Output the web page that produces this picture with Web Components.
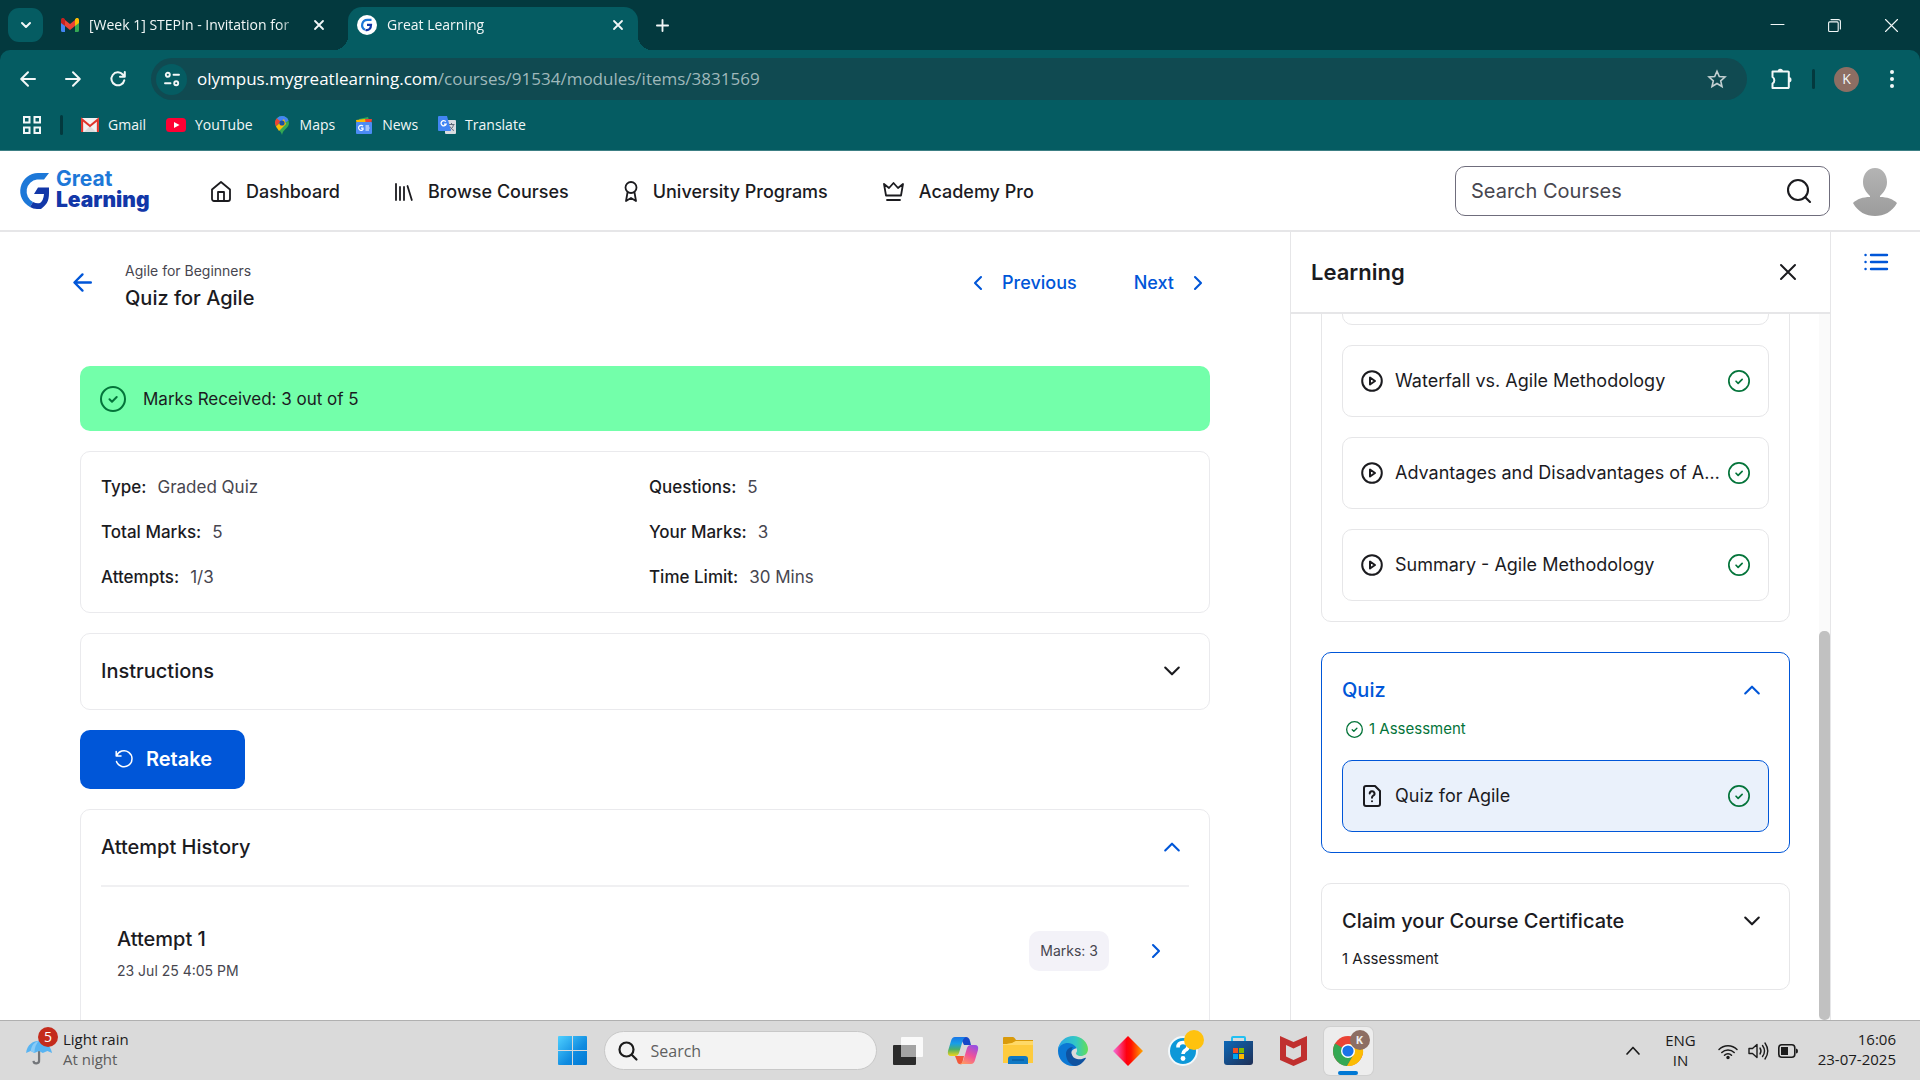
<!DOCTYPE html>
<html lang="en">
<head>
<meta charset="utf-8">
<title>Great Learning</title>
<style>
html, body { margin: 0; height: 100%; }
body {
  display: flex; flex-direction: column; overflow: hidden;
  background: #fff; color: #1b1b1f;
  font-family: Inter, "Liberation Sans", sans-serif;
}
</style>
</head>
<body>
<browser-chrome></browser-chrome>
<course-app></course-app>
<task-bar></task-bar>

<script>
const UI_FONT = '"Open Sans", "Noto Sans", sans-serif';

const define = (name, css, html) => {
  const template = document.createElement('template');
  template.innerHTML = `<style>
    *, *::before, *::after { box-sizing: border-box; }
    :host { box-sizing: border-box; }
    button { font: inherit; color: inherit; background: none; border: 0; padding: 0; margin: 0; text-align: left; }
    a { color: inherit; text-decoration: none; }
    ${css}</style>${html}`;
  customElements.define(name, class extends HTMLElement {
    constructor() {
      super();
      this.attachShadow({ mode: 'open' }).append(template.content.cloneNode(true));
    }
  });
};

/* ---------- icons ---------- */
const line = (vb, w, body) => `<svg viewBox="${vb}" fill="none" stroke="currentColor" stroke-width="${w}" stroke-linecap="round" stroke-linejoin="round">${body}</svg>`;
const art = (vb, body) => `<svg viewBox="${vb}">${body}</svg>`;
const ICONS = {
  caret: line('0 0 12 12', 2, '<path d="M2 4l4 4 4-4"/>'),
  x: line('0 0 16 16', 2, '<path d="M1 1l14 14M15 1L1 15"/>'),
  tabx: line('0 0 10 10', 1.8, '<path d="M1 1l8 8M9 1L1 9"/>'),
  plus: line('0 0 14 14', 2, '<path d="M7 1v12M1 7h12"/>'),
  min: line('0 0 13 13', 1, '<path d="M0 5.500h13"/>'),
  restore: line('0 0 13 13', 1.1, '<rect x=".6" y="2.9" width="9.6" height="9.6" rx="1"/><path d="M3 .6h7.4a2 2 0 0 1 2 2V10"/>'),
  winx: line('0 0 13 13', 1.1, '<path d="M.5.5l12 12M12.500.5l-12 12"/>'),
  back: line('0 0 16 16', 2, '<path d="M15 8H1.500M8 1.200L1.200 8 8 14.800"/>'),
  fwd: line('0 0 16 16', 2, '<path d="M1 8h13.500M8 1.200L14.800 8 8 14.800"/>'),
  reload: line('0 0 16 16', 2, '<path d="M14.300 9.200A6.500 6.500 0 1 1 12.800 3.500L14.500 5.500M14.800 1v4.800H10"/>'),
  tune: line('0 0 16 16', 1.9, '<circle cx="3.800" cy="3.800" r="2"/><path d="M9.500 3.800H15M1 12.200h5.500"/><circle cx="12.200" cy="12.200" r="2"/>'),
  star: line('0 0 20 20', 1.6, '<path stroke-linejoin="miter" d="M10 2.200l2.300 5.300 5.700.5-4.300 3.800 1.300 5.700-5-3-5 3 1.300-5.700L2 8l5.700-.5z"/>'),
  puzzle: art('0 0 22 22', '<path fill="none" stroke="currentColor" stroke-width="2" stroke-linejoin="round" d="M2.500 3.500H18a.8.8 0 0 1 .8.8V19.200a.8.8 0 0 1-.8.8H2.500V15.500a3.800 3.800 0 0 0 0-6.500z"/><path fill="currentColor" d="M7.600 3.500a2.700 2.700 0 0 1 5.400 0zM18.800 9a2.700 2.700 0 0 1 0 5.400z"/>'),
  dots: art('0 0 4 18', '<g fill="currentColor"><circle cx="2" cy="2" r="2"/><circle cx="2" cy="9" r="2"/><circle cx="2" cy="16" r="2"/></g>'),
  apps: line('0 0 18 18', 2, '<g stroke-linejoin="miter"><path d="M1 1h5.500v5.500H1zM11.500 1H17v5.500h-5.500zM1 11.500h5.500V17H1zM11.500 11.500H17V17h-5.500z"/></g>'),
  gmailM: art('0 0 18 14', '<path fill="#4285f4" d="M0 2v10.500A1.500 1.500 0 0 0 1.500 14H4V5z"/><path fill="#34a853" d="M18 2v10.500a1.500 1.500 0 0 1-1.500 1.500H14V5z"/><path fill="#ea4335" d="M4 8V2l5 4 5-4v6l-5 4z"/><path fill="#c5221f" d="M0 2C0 0 2 -.5 3.200.5L4 1.200V8L0 5z"/><path fill="#fbbc04" d="M18 2c0-2-2-2.500-3.200-1.500L14 1.200V8l4-3z"/>'),
  gmail: art('0 0 18 14', '<rect width="18" height="14" rx="1" fill="#f2f2f2"/><path fill="#ddd" d="M3 14l6-6 6 6z"/><path d="M1.100 14V1.500L9 8l7.900-6.500V14" fill="none" stroke="#e0352b" stroke-width="2.100"/>'),
  youtube: art('0 0 20 14', '<rect width="20" height="14" rx="3.500" fill="#ff0033"/><path fill="#fff" d="M8 4l5.500 3L8 10z"/>'),
  maps: art('0 0 14 19', '<path fill="#34a853" d="M7 0a7 7 0 0 1 7 7c0 5-6 6-7 12C6 14 0 12 0 7a7 7 0 0 1 7-7z"/><path fill="#4285f4" d="M7 0a7 7 0 0 1 6.500 4.500L5 10 2 2.200A7 7 0 0 1 7 0z"/><path fill="#ea4335" d="M1.800 2.300L5.500 5.500 1 10.500A7 7 0 0 1 1.800 2.300z"/><path fill="#fbbc04" d="M1 10.500L9 3l2 5-7 7z"/><circle cx="7" cy="7" r="2.600" fill="#1f4fa0"/>'),
  news: art('0 0 18 17', '<path fill="#34a853" d="M4 2L13 0l2 6H4z"/><path fill="#ea4335" d="M9 2h8l-1 6H8z"/><path fill="#fbbc04" d="M1 3l9-1 1 6H2z"/><rect x="1" y="5" width="16" height="12" rx="1" fill="#4c8bf5"/><path d="M8 9.200A2.500 2.500 0 1 0 8 12.500V11.200H6M10.500 9H14M10.500 11h4M10.500 13H14" fill="none" stroke="#fff" stroke-width="1.200"/>'),
  translate: art('0 0 18 18', '<rect x="7" y="4" width="11" height="14" rx="1" fill="#dadce0"/><path d="M10.500 8.500h6M13.500 7v1.500M15.500 8.500c-.5 3-2.500 5-4.500 6M12 10.500c1 2 2.500 3.500 4 4" fill="none" stroke="#5f6b78"/><path fill="#4285f4" d="M1 0h8l4 15H1a1 1 0 0 1-1-1V1a1 1 0 0 1 1-1z"/><path d="M7.800 5.700a2.600 2.600 0 1 0 .3 2.500H6" fill="none" stroke="#fff" stroke-width="1.300"/>'),
  glfav: art('0 0 20 20', '<circle cx="10" cy="10" r="10" fill="#fff"/><path d="M14.500 4.800H10.500A5.300 5.300 0 0 0 8 14.800" fill="none" stroke="#1b76d8" stroke-width="2.200"/><path d="M10 9.800h4C14 13.500 12 15.800 8.500 15" fill="none" stroke="#1237a8" stroke-width="2.200"/>'),
  glmark: art('0 0 29 36', '<path fill="#1d78d8" d="M29 0H18A18 18 0 0 0 10 34L13 29A12 12 0 0 1 17 6.500H24Z"/><path fill="#1237a8" d="M18 14.500H29V20C29 29 26 32 21 36H17Q13 36 10 34L13 29Q17 31 20 30Q23.500 27.500 24 21H14Z"/>'),
  home: line('0 0 20 21', 1.8, '<path d="M1 8.500L10 1l9 7.500V18a2 2 0 0 1-2 2H3a2 2 0 0 1-2-2z"/><path d="M7 20V11h6v9"/>'),
  books: line('0 0 18 18', 1.8, '<path d="M1 1v16M5 4v13M9 4v13M12.500 3l4.300 14"/>'),
  ribbon: line('0 0 14 21', 1.8, '<circle cx="7" cy="6.500" r="5.500"/><path d="M3.500 11.500L2 20l5-3 5 3-1.500-8.500"/>'),
  crown: line('0 0 21 19', 1.8, '<path d="M1 2l5 4 4.500-5L15 6l5-4-2 11.500H3zM4 18h13"/>'),
  search: line('0 0 24 24', 2.1, '<circle cx="11" cy="11" r="10"/><path d="M18 18l5 5"/>'),
  avatar: art('0 0 44 48', '<defs><linearGradient id="g" x2="0" y2="1"><stop stop-color="#b4b4b4"/><stop offset="1" stop-color="#9c9c9c"/></linearGradient></defs><g fill="url(#g)"><path d="M22 0C29 0 34 6 34 14c0 6-3 10-7 14v1c7 0 13 2 17 6-5 9-13 13-22 13S5 44 0 35c4-4 10-6 17-6v-1c-4-4-7-8-7-14C10 6 15 0 22 0z"/></g>'),
  list: line('0 0 24 18', 2.4, '<path d="M7 2h16M7 9h16M7 16h16"/><path d="M1.500 2h.1M1.500 9h.1M1.500 16h.1"/>'),
  check: line('0 0 26 26', 2, '<circle cx="13" cy="13" r="12"/><path d="M9.500 13.300l2.500 2.400 4.700-4.700"/>'),
  down: line('0 0 16 10', 2.1, '<path d="M1.200 1.500L8 8.300l6.800-6.800"/>'),
  up: line('0 0 16 10', 2.1, '<path d="M1.200 8.500L8 1.700l6.800 6.800"/>'),
  left: line('0 0 10 16', 2.1, '<path d="M8 2L2 8l6 6"/>'),
  right: line('0 0 10 16', 2.1, '<path d="M2 2l6 6-6 6"/>'),
  retake: line('0 0 18 18', 1.5, '<path d="M1.200 1.500V6H6M1.500 6A8 8 0 1 1 1.500 11.500"/>'),
  play: line('0 0 22 22', 2, '<circle cx="11" cy="11" r="9.800"/><path d="M9 7.500v7l5-3.500z"/>'),
  quiz: line('0 0 18 22', 2, '<path d="M3 1h9l5 5v13a2 2 0 0 1-2 2H3a2 2 0 0 1-2-2V3a2 2 0 0 1 2-2z"/><path d="M6.700 8.500a2.400 2.400 0 1 1 3.500 2.200C9.200 11.200 9 11.700 9 12.800M9 16.300h.01"/>'),
  umbrella: art('0 0 30 28', '<path d="M14 13v10a3 3 0 0 1-6 .5" fill="none" stroke="#73767a" stroke-width="2.400"/><path fill="#58b4f2" d="M0 15C1 6 8 2 14 2s12 4 14 13l-5-2-5 2-4-2-5 2-4-2z"/><path fill="#8acbf6" d="M5 13C6 6 10 3 14 2c-3 3-5 7-5 13z"/>'),
  windows: art('0 0 29 29', '<defs><linearGradient id="w" x2="1" y2="1"><stop stop-color="#4fd0ff"/><stop offset=".6" stop-color="#0f8be0"/><stop offset="1" stop-color="#0078d4"/></linearGradient></defs><path fill="url(#w)" d="M0 1a1 1 0 0 1 1-1h13v14H0zM15 0h13a1 1 0 0 1 1 1v13H15zM0 15h14v14H1a1 1 0 0 1-1-1zM15 15h14v13a1 1 0 0 1-1 1H15z"/>'),
  wsearch: line('0 0 20 20', 2.2, '<circle cx="8.500" cy="8.500" r="7"/><path d="M14 14l4.500 4.500"/>'),
  taskview: art('0 0 30 28', '<rect y="8" width="23" height="20" rx="1" fill="#2b2b2b"/><rect x="8" width="22" height="20" rx="1" fill="#fafafa"/><path fill="#a4a4a4" d="M8 8h15v12H8z"/>'),
  copilot: art('0 0 30 28', '<defs><linearGradient id="c1" x2="0" y2="1"><stop stop-color="#1976e8"/><stop offset=".35" stop-color="#189fe6"/><stop offset=".65" stop-color="#4caf6a"/><stop offset="1" stop-color="#f4d516"/></linearGradient><linearGradient id="c2" x1=".7" x2=".2" y2="1"><stop stop-color="#9a4fe0"/><stop offset=".5" stop-color="#f0529a"/><stop offset="1" stop-color="#ff9a62"/></linearGradient></defs><path fill="#1749c8" d="M12 0h6q3 0 4 4l1 4h-7z"/><path fill="#f2593a" d="M7 19h9l-2 8q-4 1-5-3z"/><path fill="url(#c1)" d="M7 0h11q-3 1-4 6l-3 10q-1 3-4 3H3q-4 0-3-5L3 4q1-4 4-4z"/><path fill="url(#c2)" d="M23 27H12q3-1 4-6l3-10q1-3 4-3h4q4 0 3 5l-3 10q-1 4-4 4z"/>'),
  folder: art('0 0 30 27', '<path fill="#d99a0b" d="M0 1q0-1 1-1h9q1 0 2 1.500L13 3h17v6H0z"/><path fill="#fecb3e" d="M0 7q8 0 11-2l2-1h17v22H0z"/><path fill="#ffd968" d="M0 7q8 0 11-2l2-1h17v4H0z"/><path fill="#0f78c4" d="M5 27v-5q0-3 3-3h14q3 0 3 3v5z"/><path d="M9 23h12" stroke="#07508f" stroke-width="1"/>'),
  edge: art('0 0 30 30', '<defs><linearGradient id="e" x2="1"><stop stop-color="#2aa5e8"/><stop offset=".6" stop-color="#33c8c4"/><stop offset="1" stop-color="#63de55"/></linearGradient></defs><path fill="#0b78d4" d="M0 15C0 8 4 6 9 6q8 0 10 6l-3 1c-4 2-5 8-1 12q3 3 7 3-3 2-7 2C6 30 0 23 0 15z"/><path fill="url(#e)" d="M0 14C1 5 8 0 15 0c9 0 15 7 15 13 0 5-4 7-7 7-4 0-5-2-5-3 1-1 1-2 1-3 0-3-4-7-9-7-5 0-8 2-10 7z"/><path fill="#0f52a0" d="M8 18c0-4 3-7 7-7-3 3-2 11 4 12 4 .7 6-.3 8.300-1.300 .5 0 .7.500.5.800C25 27 21 30 17 30c-5-1-9-6-9-12z"/>'),
  diamond: art('0 0 30 30', '<defs><linearGradient id="d" x2="1"><stop stop-color="#f56ee0"/><stop offset=".45" stop-color="#ff0010"/><stop offset=".6" stop-color="#ff1000"/><stop offset="1" stop-color="#ffa800"/></linearGradient></defs><path fill="url(#d)" d="M15 0l15 15-15 15L0 15z"/>'),
  help: art('1 6 28 30', '<circle cx="15" cy="21" r="14" fill="#0d98d8" stroke="#f2f8fb" stroke-width="2"/><path d="M10 17.500q0-5 5-5t5 4q0 2.500-3 4-2 1.500-2 3.500" fill="none" stroke="#fff" stroke-width="3.600"/><circle cx="15" cy="28.500" r="2.400" fill="#fff"/><circle cx="26" cy="10" r="10" fill="#ffc20e"/>'),
  store: art('0 0 29 29', '<defs><linearGradient id="s" x2="1" y2="1"><stop stop-color="#0c68b8"/><stop offset="1" stop-color="#1f2f55"/></linearGradient></defs><path d="M8 6V2q0-1 1-1h11q1 0 1 1v4" fill="none" stroke="#22c0f2" stroke-width="2"/><path fill="url(#s)" d="M0 5h29v21q0 3-3 3H3q-3 0-3-3z"/><path fill="#f25022" d="M9 12h5v5H9z"/><path fill="#7fba00" d="M15 12h5v5h-5z"/><path fill="#00a4ef" d="M9 18h5v5H9z"/><path fill="#ffb900" d="M15 18h5v5h-5z"/>'),
  mcafee: art('0 0 27 30', '<path fill="#c0302f" fill-rule="evenodd" d="M0 0l13.500 6L27 0v24l-13.500 6L0 24zM6 9v11.500l7.500 3.500 7.500-3.500V9l-7.500 3.500z"/>'),
  chrome: art('0 0 30 30', '<circle cx="15" cy="15" r="15" fill="#ea4335"/><path fill="#34a853" d="M15 15L2 7.500A15 15 0 0 0 14 30l7-12z"/><path fill="#fbbc04" d="M15 8h13.300A15 15 0 0 1 14 30l7-12z"/><circle cx="15" cy="15" r="7" fill="#fff"/><circle cx="15" cy="15" r="5.600" fill="#1a73e8"/>'),
  trayup: line('0 0 14 9', 1.7, '<path d="M1 8l6-6.500L13 8"/>'),
  wifi: line('0 0 20 18', 1.5, '<path d="M1 7.500a12.500 12.500 0 0 1 18 0M3.800 10.500a8.800 8.800 0 0 1 12.400 0M6.500 13.300a5 5 0 0 1 7 0"/><circle cx="10" cy="15.500" r="1" fill="currentColor"/>'),
  sound: line('0 0 20 20', 1.4, '<path d="M1 7.500h3.500L9 3.500v13l-4.500-4H1zM12 7q2 3 0 6M14.500 4.500q4 5.500 0 11M17 2q5.500 8 0 16"/>'),
  battery: art('0 0 20 14', '<rect x=".8" y=".8" width="16" height="12.400" rx="3" fill="none" stroke="currentColor" stroke-width="1.600"/><path fill="currentColor" d="M3 3h7v8H3zM18 4.500q2 0 2 2.500t-2 2.500z"/>')
};
customElements.define('ui-icon', class extends HTMLElement {
  connectedCallback() {
    const w = this.getAttribute('w'), h = this.getAttribute('h') || w;
    const root = this.shadowRoot || this.attachShadow({ mode: 'open' });
    root.innerHTML = `<style>:host{display:block;flex:none;width:${w}px;height:${h}px}svg{display:block;width:100%;height:100%;overflow:visible}</style>${ICONS[this.getAttribute('name')]}`;
  }
});

/* ---------- browser window ---------- */
define('browser-tab', `
  :host { display: flex; align-items: center; gap: 10px; height: 43px; padding: 0 15px 8px 18px; width: 290px; border-radius: 14px 14px 0 0; position: relative; }
  :host(:not([active])) { padding-right: 9px; }
  :host([active]) { background: #055c62; padding-left: 9px; margin-left: 15px; }
  :host([active])::before, :host([active])::after { content: ""; position: absolute; bottom: 0; width: 14px; height: 14px; }
  :host([active])::before { right: 100%; background: radial-gradient(circle at 0 0, #03393e 14px, #055c62 14px); }
  :host([active])::after { left: 100%; background: radial-gradient(circle at 100% 0, #03393e 14px, #055c62 14px); }
  .title { flex: 1; overflow: hidden; white-space: nowrap; -webkit-mask-image: linear-gradient(90deg, #000 88%, transparent); }
`, `<slot name="icon"></slot><span class="title"><slot></slot></span><button aria-label="Close tab"><ui-icon name="tabx" w="10"></ui-icon></button>`);

define('book-mark', `
  :host { display: block; }
  a { display: flex; align-items: center; gap: 9px; }
`, `<a href="#"><slot name="icon"></slot><slot></slot></a>`);

define('browser-chrome', `
  :host { display: block; flex: none; background: #03393e; color: #f2f7f7; font: 14px/20px ${UI_FONT}; border-bottom: 1px solid #3c7f84; }
  .tabs { display: flex; align-items: flex-end; height: 50px; padding-left: 8px; }
  .menu { width: 35px; height: 34px; border-radius: 11px; background: #055c62; display: grid; place-items: center; margin-bottom: 8px; }
  .new { margin: 0 auto 18px 18px; }
  .win { display: flex; gap: 44px; padding: 0 22px 18px 0; }
  .tools { background: #055c62; border-radius: 10px 10px 0 0; height: 100px; }
  .bar { display: flex; align-items: center; padding: 8px 26px 0 20px; }
  .nav { display: flex; gap: 29px; margin-right: 25px; }
  .url { flex: 1; display: flex; align-items: center; gap: 10px; height: 42px; border-radius: 21px; background: #104a51; padding: 0 20px 0 5px; font-size: 17px; line-height: 24px; }
  .site { width: 31px; height: 31px; border-radius: 50%; background: #055c62; display: grid; place-items: center; }
  .addr { flex: 1; outline: 0; color: #fff; }
  .addr span { color: #9fb8bb; }
  .sep { width: 3px; height: 20px; border-radius: 2px; background: #03393e; }
  .user { width: 25px; height: 25px; border-radius: 50%; background: #8d6e63; display: grid; place-items: center; font: 14px/16px ${UI_FONT}; }
  .right { display: flex; align-items: center; margin-left: 23px; }
  .right .sep { margin: 0 19px 0 20px; }
  .right .user { margin-right: 31px; }
  .marks { display: flex; align-items: center; height: 50px; gap: 20px; padding-left: 23px; }
  .marks .sep { margin: 0 -2px 0 -1px; }
  .star { color: #c3cfd1; }
`, `
  <div class="tabs">
    <button class="menu" aria-label="Search tabs"><ui-icon name="caret" w="12"></ui-icon></button>
    <browser-tab><ui-icon slot="icon" name="gmailM" w="18" h="14"></ui-icon>[Week 1] STEPIn - Invitation for</browser-tab>
    <browser-tab active><ui-icon slot="icon" name="glfav" w="20"></ui-icon>Great Learning</browser-tab>
    <button class="new" aria-label="New tab"><ui-icon name="plus" w="13"></ui-icon></button>
    <div class="win">
      <button aria-label="Minimize"><ui-icon name="min" w="13"></ui-icon></button>
      <button aria-label="Restore"><ui-icon name="restore" w="13"></ui-icon></button>
      <button aria-label="Close"><ui-icon name="winx" w="13"></ui-icon></button>
    </div>
  </div>
  <div class="tools">
    <div class="bar">
      <div class="nav">
        <button aria-label="Back"><ui-icon name="back" w="16"></ui-icon></button>
        <button aria-label="Forward"><ui-icon name="fwd" w="16"></ui-icon></button>
        <button aria-label="Reload"><ui-icon name="reload" w="16"></ui-icon></button>
      </div>
      <div class="url">
        <button class="site" aria-label="Site information"><ui-icon name="tune" w="16"></ui-icon></button>
        <div class="addr" role="textbox" aria-label="Address" contenteditable="true">olympus.mygreatlearning.com<span>/courses/91534/modules/items/3831569</span></div>
        <button class="star" aria-label="Bookmark"><ui-icon name="star" w="20"></ui-icon></button>
      </div>
      <div class="right">
        <button aria-label="Extensions"><ui-icon name="puzzle" w="22"></ui-icon></button>
        <i class="sep"></i>
        <button class="user">K</button>
        <button aria-label="Menu"><ui-icon name="dots" w="4" h="18"></ui-icon></button>
      </div>
    </div>
    <div class="marks">
      <button aria-label="Apps"><ui-icon name="apps" w="18"></ui-icon></button>
      <i class="sep"></i>
      <book-mark><ui-icon slot="icon" name="gmail" w="18" h="14"></ui-icon>Gmail</book-mark>
      <book-mark><ui-icon slot="icon" name="youtube" w="20" h="14"></ui-icon>YouTube</book-mark>
      <book-mark><ui-icon slot="icon" name="maps" w="18" h="19"></ui-icon>Maps</book-mark>
      <book-mark><ui-icon slot="icon" name="news" w="18" h="17"></ui-icon>News</book-mark>
      <book-mark><ui-icon slot="icon" name="translate" w="18"></ui-icon>Translate</book-mark>
    </div>
  </div>`);

/* ---------- site header ---------- */
define('nav-link', `
  :host { display: block; padding-top: 2px; font: 500 18px/24px Inter, sans-serif; }
  a { display: flex; align-items: center; gap: 15px; white-space: nowrap; }
`, `<a href="#"><slot name="icon"></slot><slot></slot></a>`);

define('site-header', `
  :host { display: flex; align-items: center; flex: none; height: 81px; padding: 0 23px 0 20px; border-bottom: 2px solid #e6e6e8; }
  .logo { display: flex; align-items: center; gap: 7px; font: 700 21px/21px Inter, sans-serif; color: #1d78d8; width: 191px; }
  .logo span { padding-bottom: 3px; }
  .logo b { display: block; color: #1237a8; }
  nav { display: flex; gap: 55px; }
  .search { display: flex; align-items: center; margin-left: auto; width: 375px; height: 50px; padding: 0 18px 0 15px; border: 1px solid #6f6d7c; border-radius: 10px; }
  input { flex: 1; min-width: 0; border: 0; outline: 0; padding: 0; background: none; font: 20px/24px Inter, sans-serif; color: #1b1b1f; }
  input::placeholder { color: #47464f; opacity: 1; }
  .me { margin-left: 23px; padding-top: 2px; }
`, `
  <a class="logo" href="#"><ui-icon name="glmark" w="29" h="36"></ui-icon><span>Great<b>Learning</b></span></a>
  <nav>
    <nav-link><ui-icon slot="icon" name="home" w="20" h="21"></ui-icon>Dashboard</nav-link>
    <nav-link><ui-icon slot="icon" name="books" w="18"></ui-icon>Browse Courses</nav-link>
    <nav-link><ui-icon slot="icon" name="ribbon" w="14" h="21"></ui-icon>University Programs</nav-link>
    <nav-link><ui-icon slot="icon" name="crown" w="21" h="19"></ui-icon>Academy Pro</nav-link>
  </nav>
  <label class="search"><input type="text" placeholder="Search Courses" aria-label="Search Courses"><ui-icon name="search" w="24"></ui-icon></label>
  <button class="me" aria-label="Profile"><ui-icon name="avatar" w="44" h="48"></ui-icon></button>`);

/* ---------- quiz page ---------- */
define('info-row', `
  :host { display: flex; gap: 11px; font: 17px/25px Inter, sans-serif; color: #47464f; }
  b { font-weight: 500; color: #1b1b1f; }
`, `<b><slot name="label"></slot></b><span><slot></slot></span>`);

define('fold-card', `
  :host { display: block; border: 1px solid #eaeaed; border-radius: 10px; padding: 0 20px; }
  button { display: flex; width: 100%; align-items: center; justify-content: space-between; height: 75px; padding: 0 9px 2px 0; font: 500 20px/28px Inter, sans-serif; }
  slot[name=icon] { display: block; }
`, `<button><slot name="title"></slot><slot name="icon"></slot></button><slot></slot>`);

define('attempt-row', `
  :host { display: flex; align-items: center; justify-content: space-between; border-top: 2px solid #f0f0f2; padding: 37px 28px 60px 16px; }
  h3 { margin: 0 0 6px; font: 500 20px/30px Inter, sans-serif; }
  .date { font: 14px/22px Inter, sans-serif; color: #47464f; }
  .end { display: flex; align-items: center; gap: 42px; padding-bottom: 4px; }
  .badge { padding: 8px 11px; background: #f3f2f8; border-radius: 10px; font: 14px/24px Inter, sans-serif; color: #47464f; }
  button { color: #0056d8; }
`, `<div><h3><slot></slot></h3><div class="date"><slot name="date"></slot></div></div>
  <div class="end"><span class="badge"><slot name="badge"></slot></span><button aria-label="Open attempt"><ui-icon name="right" w="10" h="18"></ui-icon></button></div>`);

define('quiz-page', `
  :host { display: block; flex: 1; min-width: 0; overflow: hidden; padding: 26px 80px 0; }
  .head { display: flex; align-items: center; justify-content: space-between; height: 48px; margin: 0 7px 60px -7px; }
  .blue { color: #0056d8; }
  .title { display: flex; align-items: center; gap: 33px; }
  .title div { padding-top: 8px; }
  .title p { margin: 0; font: 14px/24px Inter, sans-serif; color: #47464f; }
  h1 { margin: 0; font: 500 20px/30px Inter, sans-serif; }
  .pager { display: flex; gap: 57px; padding-top: 2px; font: 500 18px/24px Inter, sans-serif; }
  .pager a { display: flex; align-items: center; gap: 19px; }
  .stack { display: flex; flex-direction: column; gap: 20px; }
  .banner { display: flex; align-items: center; gap: 17px; height: 65px; padding: 0 20px; border-radius: 10px; background: #73ffaa; font: 17px/24px Inter, sans-serif; }
  .banner ui-icon { color: #04743a; }
  .info { display: grid; grid-template-columns: 1fr 1fr; gap: 20px 8px; padding: 23px 20px 22px; border: 1px solid #eaeaed; border-radius: 10px; }
  .retake { align-self: flex-start; display: flex; align-items: center; gap: 13px; height: 59px; padding: 0 33px 2px 35px; border-radius: 10px; background: #0056d8; color: #fff; font: 600 20px/28px Inter, sans-serif; }
`, `
  <div class="head">
    <div class="title">
      <a href="#" class="blue" aria-label="Back"><ui-icon name="back" w="19"></ui-icon></a>
      <div><p>Agile for Beginners</p><h1>Quiz for Agile</h1></div>
    </div>
    <nav class="pager blue">
      <a href="#"><ui-icon name="left" w="10" h="16"></ui-icon>Previous</a>
      <a href="#">Next<ui-icon name="right" w="10" h="16"></ui-icon></a>
    </nav>
  </div>
  <div class="stack">
    <div class="banner"><ui-icon name="check" w="26"></ui-icon>Marks Received: 3 out of 5</div>
    <div class="info">
      <info-row><span slot="label">Type:</span>Graded Quiz</info-row>
      <info-row><span slot="label">Questions:</span>5</info-row>
      <info-row><span slot="label">Total Marks:</span>5</info-row>
      <info-row><span slot="label">Your Marks:</span>3</info-row>
      <info-row><span slot="label">Attempts:</span>1/3</info-row>
      <info-row><span slot="label">Time Limit:</span>30 Mins</info-row>
    </div>
    <fold-card><span slot="title">Instructions</span><ui-icon slot="icon" name="down" w="16" h="10"></ui-icon></fold-card>
    <button class="retake"><ui-icon name="retake" w="18"></ui-icon>Retake</button>
    <fold-card><span slot="title">Attempt History</span><ui-icon slot="icon" class="blue" name="up" w="16" h="10"></ui-icon>
      <attempt-row>Attempt 1<span slot="date">23 Jul 25 4:05 PM</span><span slot="badge">Marks: 3</span></attempt-row>
    </fold-card>
  </div>`);

/* ---------- learning panel ---------- */
define('lesson-item', `
  :host { display: block; border: 1px solid #e6e6e8; border-radius: 10px; height: 72px; }
  :host([current]) { border-color: #0056d8; background: #eaf1fb; }
  a { display: flex; align-items: center; gap: 12px; height: 100%; padding: 0 18px; font: 18px/24px Inter, sans-serif; }
  .name { flex: 1; min-width: 0; margin-right: -6px; white-space: nowrap; overflow: hidden; text-overflow: ellipsis; }
  .lead { display: grid; place-items: center; width: 22px; }
  .done { color: #04743a; }
`, `<a href="#"><span class="lead"><slot name="icon"></slot></span><span class="name"><slot></slot></span><ui-icon class="done" name="check" w="22"></ui-icon></a>`);

define('module-card', `
  :host { display: flex; flex-direction: column; flex: none; gap: 20px; border: 1px solid #e6e6e8; border-radius: 10px; padding: 20px; }
  :host([open]) { border-color: #0056d8; }
`, `<slot></slot>`);

define('module-head', `
  :host { display: block; }
  button { display: flex; width: 100%; align-items: center; justify-content: space-between; padding: 3px 9px 3px 0; margin-bottom: 11px; font: 500 20px/28px Inter, sans-serif; }
  :host([open]) button { color: #0056d8; }
  .meta { display: flex; align-items: center; gap: 6px; font: 15px/20px Inter, sans-serif; }
  :host([open]) .meta { color: #04743a; padding-left: 4px; height: 22px; }
`, `<button><slot></slot><slot name="icon"></slot></button><div class="meta"><slot name="meta"></slot></div>`);

define('learning-panel', `
  :host { display: flex; flex-direction: column; flex: none; width: 541px; border: solid #e6e6e8; border-width: 0 1px; overflow: hidden; }
  header { display: flex; align-items: center; justify-content: space-between; flex: none; height: 82px; padding: 0 34px 0 20px; border-bottom: 2px solid #e6e6e8; }
  h2 { margin: 0; font: 600 22px/28px Inter, sans-serif; }
  .body { flex: 1; min-height: 0; display: flex; }
  .list { flex: 1; min-width: 0; display: flex; flex-direction: column; justify-content: flex-end; gap: 30px; padding: 0 29px 30px 30px; overflow: hidden; }
  .track { width: 11px; background: #fafafa; display: flex; flex-direction: column; }
  .track::before { content: ""; flex: 317; }
  .track::after { content: ""; flex: 390; border-radius: 5px; background: #c1c1c1; }
`, `
  <header><h2>Learning</h2><button aria-label="Close panel"><ui-icon name="x" w="16"></ui-icon></button></header>
  <div class="body">
    <div class="list">
      <module-card>
        <lesson-item></lesson-item>
        <lesson-item><ui-icon slot="icon" name="play" w="22"></ui-icon>Waterfall vs. Agile Methodology</lesson-item>
        <lesson-item><ui-icon slot="icon" name="play" w="22"></ui-icon>Advantages and Disadvantages of Agile</lesson-item>
        <lesson-item><ui-icon slot="icon" name="play" w="22"></ui-icon>Summary - Agile Methodology</lesson-item>
      </module-card>
      <module-card open>
        <module-head open>Quiz<ui-icon slot="icon" name="up" w="16" h="10"></ui-icon><ui-icon slot="meta" name="check" w="17"></ui-icon><span slot="meta">1 Assessment</span></module-head>
        <lesson-item current><ui-icon slot="icon" name="quiz" w="18" h="22"></ui-icon>Quiz for Agile</lesson-item>
      </module-card>
      <module-card>
        <module-head>Claim your Course Certificate<ui-icon slot="icon" name="down" w="16" h="10"></ui-icon><span slot="meta">1 Assessment</span></module-head>
      </module-card>
    </div>
    <div class="track"></div>
  </div>`);

define('course-app', `
  :host { display: flex; flex-direction: column; flex: 1; min-height: 0; }
  .main { flex: 1; min-height: 0; display: flex; }
  .rail { flex: none; width: 89px; padding: 21px 0 0 33px; color: #0056d8; }
`, `
  <site-header></site-header>
  <div class="main">
    <quiz-page></quiz-page>
    <learning-panel></learning-panel>
    <div class="rail"><button aria-label="Contents"><ui-icon name="list" w="24" h="18"></ui-icon></button></div>
  </div>`);

/* ---------- taskbar ---------- */
define('task-app', `
  :host { display: block; position: relative; }
  button { display: grid; place-items: center; width: 49px; height: 48px; border-radius: 6px; }
  :host([running]) button { background: #ededed; box-shadow: 0 0 0 1px #d0d0d0; }
  :host([running])::after { content: ""; position: absolute; left: 14px; bottom: 0; width: 20px; height: 4px; border-radius: 2px; background: #0078d4; }
  ::slotted(.who) { position: absolute; top: 3px; right: 3px; width: 20px; height: 20px; border-radius: 50%; background: #8d6e63; color: #eee; font: 700 11px/20px ${UI_FONT}; text-align: center; }
`, `<button><slot></slot></button>`);

define('task-bar', `
  :host { display: grid; grid-template-columns: 1fr auto 1fr; align-items: center; flex: none; height: 60px; border-top: 1px solid #b0b0b0; background: #dadada; color: #1b1b1b; font: 15px/20px ${UI_FONT}; }
  .weather { display: flex; align-items: center; gap: 7px; padding-left: 26px; }
  .weather .ico { position: relative; width: 30px; height: 36px; padding-top: 6px; }
  .count { position: absolute; left: 12px; top: -6px; width: 20px; height: 20px; border-radius: 50%; background: #c42b1c; color: #fff; font: 14px/20px ${UI_FONT}; text-align: center; }
  .grey { color: #5c5c5c; }
  .info, .clock { padding-bottom: 4px; }
  .apps { display: flex; align-items: center; gap: 6px; }
  .search { display: flex; align-items: center; gap: 13px; width: 273px; height: 39px; padding: 0 13px; margin: 0 1px; border-radius: 20px; background: #f3f3f3; border: 1px solid #c8c8c8; }
  input { flex: 1; min-width: 0; border: 0; outline: 0; padding: 0; background: none; font: 16px/24px ${UI_FONT}; }
  input::placeholder { color: #5f5f5f; opacity: 1; }
  .tray { display: flex; align-items: center; justify-content: flex-end; padding-right: 24px; text-align: center; }
  .lang { margin: 0 22px 0 25px; padding-bottom: 2px; }
  .net { display: flex; align-items: center; gap: 10px; margin-right: 20px; }
  .clock { text-align: right; }
`, `
  <div class="weather"><div class="ico"><ui-icon name="umbrella" w="28" h="26"></ui-icon><span class="count">5</span></div><div class="info">Light rain<div class="grey">At night</div></div></div>
  <div class="apps">
    <task-app><ui-icon name="windows" w="29"></ui-icon></task-app>
    <label class="search"><ui-icon name="wsearch" w="20"></ui-icon><input type="text" placeholder="Search" aria-label="Search"></label>
    <task-app><ui-icon name="taskview" w="30" h="28"></ui-icon></task-app>
    <task-app><ui-icon name="copilot" w="30" h="28"></ui-icon></task-app>
    <task-app><ui-icon name="folder" w="30" h="27"></ui-icon></task-app>
    <task-app><ui-icon name="edge" w="30"></ui-icon></task-app>
    <task-app><ui-icon name="diamond" w="30"></ui-icon></task-app>
    <task-app><ui-icon name="help" w="28" h="30"></ui-icon></task-app>
    <task-app><ui-icon name="store" w="29"></ui-icon></task-app>
    <task-app><ui-icon name="mcafee" w="27" h="30"></ui-icon></task-app>
    <task-app running><ui-icon name="chrome" w="30"></ui-icon><span class="who">K</span></task-app>
  </div>
  <div class="tray">
    <button aria-label="Hidden icons"><ui-icon name="trayup" w="14" h="9"></ui-icon></button>
    <div class="lang">ENG<br>IN</div>
    <div class="net"><ui-icon name="wifi" w="20" h="18"></ui-icon><ui-icon name="sound" w="20"></ui-icon><ui-icon name="battery" w="20" h="14"></ui-icon></div>
    <div class="clock">16:06<br>23-07-2025</div>
  </div>`);
</script>
</body>
</html>
